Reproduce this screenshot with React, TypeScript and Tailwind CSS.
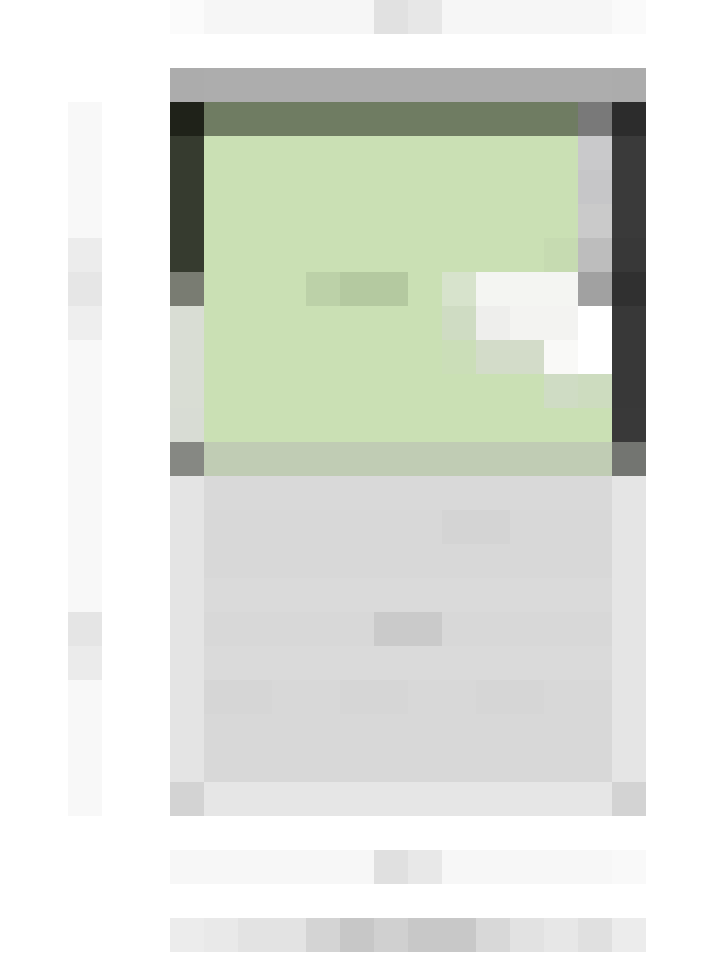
import React from "react";

type Seg = [string, number];

const G = "bg-[#cae0b4]";
const GR = "bg-[#d8d8d8]";

const topBar: Seg[] = [
  ["bg-[#fbfbfb]", 1],
  ["bg-[#f6f6f6]", 5],
  ["bg-[#e1e1e1]", 1],
  ["bg-[#e7e7e7]", 1],
  ["bg-[#f6f6f6]", 5],
  ["bg-[#fafafa]", 1],
];

const cardRows: Seg[][] = [
  [["bg-[#acacac]", 1], ["bg-[#adadad]", 12], ["bg-[#acacac]", 1]],
  [["bg-[#1f2219]", 1], ["bg-[#6f7c62]", 11], ["bg-[#797979]", 1], ["bg-[#2c2c2c]", 1]],
  [["bg-[#363b2f]", 1], [G, 11], ["bg-[#c9c9cb]", 1], ["bg-[#3a3a3a]", 1]],
  [["bg-[#363b2f]", 1], [G, 11], ["bg-[#c6c6c8]", 1], ["bg-[#3a3a3a]", 1]],
  [["bg-[#363b2f]", 1], [G, 11], ["bg-[#cacaca]", 1], ["bg-[#3a3a3a]", 1]],
  [["bg-[#363b2f]", 1], [G, 10], ["bg-[#c6dbb1]", 1], ["bg-[#bdbdbd]", 1], ["bg-[#383838]", 1]],
  [
    ["bg-[#797c72]", 1],
    [G, 3],
    ["bg-[#bcd1a8]", 1],
    ["bg-[#b4c9a0]", 2],
    [G, 1],
    ["bg-[#d7e3cc]", 1],
    ["bg-[#f4f5f2]", 3],
    ["bg-[#a1a1a1]", 1],
    ["bg-[#303030]", 1],
  ],
  [
    ["bg-[#d9ddd4]", 1],
    [G, 7],
    ["bg-[#cfdcc3]", 1],
    ["bg-[#eeeeec]", 1],
    ["bg-[#f3f3f1]", 2],
    ["bg-[#ffffff]", 1],
    ["bg-[#383838]", 1],
  ],
  [
    ["bg-[#d9ddd4]", 1],
    [G, 7],
    ["bg-[#cbdeb8]", 1],
    ["bg-[#d3dcc9]", 2],
    ["bg-[#f9f9f7]", 1],
    ["bg-[#ffffff]", 1],
    ["bg-[#383838]", 1],
  ],
  [["bg-[#d9ddd4]", 1], [G, 10], ["bg-[#cfdcc4]", 1], ["bg-[#cddcbf]", 1], ["bg-[#383838]", 1]],
  [["bg-[#d8dcd4]", 1], [G, 12], ["bg-[#393939]", 1]],
  [["bg-[#868883]", 1], ["bg-[#c0ccb4]", 12], ["bg-[#737571]", 1]],
  [["bg-[#e4e4e4]", 1], ["bg-[#d9d9d9]", 12], ["bg-[#e5e5e5]", 1]],
  [["bg-[#e4e4e4]", 1], [GR, 7], ["bg-[#d4d4d4]", 2], [GR, 3], ["bg-[#e5e5e5]", 1]],
  [["bg-[#e4e4e4]", 1], [GR, 12], ["bg-[#e5e5e5]", 1]],
  [["bg-[#e4e4e4]", 1], ["bg-[#dadada]", 12], ["bg-[#e5e5e5]", 1]],
  [["bg-[#e4e4e4]", 1], [GR, 5], ["bg-[#cacaca]", 2], [GR, 5], ["bg-[#e5e5e5]", 1]],
  [["bg-[#e4e4e4]", 1], ["bg-[#dadada]", 12], ["bg-[#e5e5e5]", 1]],
  [["bg-[#e4e4e4]", 1], ["bg-[#d6d6d6]", 2], [GR, 2], ["bg-[#d6d6d6]", 2], [GR, 2], ["bg-[#d6d6d6]", 2], [GR, 2], ["bg-[#e5e5e5]", 1]],
  [["bg-[#e4e4e4]", 1], [GR, 12], ["bg-[#e5e5e5]", 1]],
  [["bg-[#e4e4e4]", 1], [GR, 12], ["bg-[#e5e5e5]", 1]],
  [["bg-[#d3d3d3]", 1], ["bg-[#e6e6e6]", 12], ["bg-[#d3d3d3]", 1]],
];

const midBar: Seg[] = [
  ["bg-[#f7f7f7]", 6],
  ["bg-[#e0e0e0]", 1],
  ["bg-[#e8e8e8]", 1],
  ["bg-[#f7f7f7]", 5],
  ["bg-[#f9f9f9]", 1],
];

const bottomBar: Seg[] = [
  ["bg-[#ececec]", 1],
  ["bg-[#e9e9e9]", 1],
  ["bg-[#e3e3e3]", 2],
  ["bg-[#d4d4d4]", 1],
  ["bg-[#c7c7c7]", 1],
  ["bg-[#d0d0d0]", 1],
  ["bg-[#c8c8c8]", 2],
  ["bg-[#d8d8d8]", 1],
  ["bg-[#e2e2e2]", 1],
  ["bg-[#e7e7e7]", 1],
  ["bg-[#e0e0e0]", 1],
  ["bg-[#ececec]", 1],
];

const strip: string[] = [
  "bg-[#f8f8f8]", "bg-[#f8f8f8]", "bg-[#f8f8f8]", "bg-[#f8f8f8]",
  "bg-[#ececec]", "bg-[#e6e6e6]", "bg-[#eeeeee]",
  "bg-[#f8f8f8]", "bg-[#f8f8f8]", "bg-[#f8f8f8]", "bg-[#f8f8f8]",
  "bg-[#f8f8f8]", "bg-[#f8f8f8]", "bg-[#f8f8f8]", "bg-[#f8f8f8]",
  "bg-[#e5e5e5]", "bg-[#ebebeb]",
  "bg-[#f8f8f8]", "bg-[#f8f8f8]", "bg-[#f8f8f8]", "bg-[#f8f8f8]",
];

function Row({ segs }: { segs: Seg[] }) {
  return (
    <div className="flex h-[34px]">
      {segs.map(([cls, n], i) => (
        <div key={i} className={`${cls} h-[34px] shrink-0`} style={{ width: n * 34 }} />
      ))}
    </div>
  );
}

export default function App() {
  return (
    <div className="w-[720px] h-[960px] bg-white flex overflow-hidden">
      <div className="w-[68px] shrink-0" />
      <div className="w-[34px] shrink-0 flex flex-col pt-[102px]">
        {strip.map((c, i) => (
          <div key={i} className={`${c} h-[34px]`} />
        ))}
      </div>
      <div className="w-[68px] shrink-0" />
      <div className="w-[476px] shrink-0 flex flex-col">
        <Row segs={topBar} />
        <div className="h-[34px]" />
        <div className="flex flex-col">
          {cardRows.map((r, i) => (
            <Row key={i} segs={r} />
          ))}
        </div>
        <div className="h-[34px]" />
        <Row segs={midBar} />
        <div className="h-[34px]" />
        <Row segs={bottomBar} />
      </div>
    </div>
  );
}
